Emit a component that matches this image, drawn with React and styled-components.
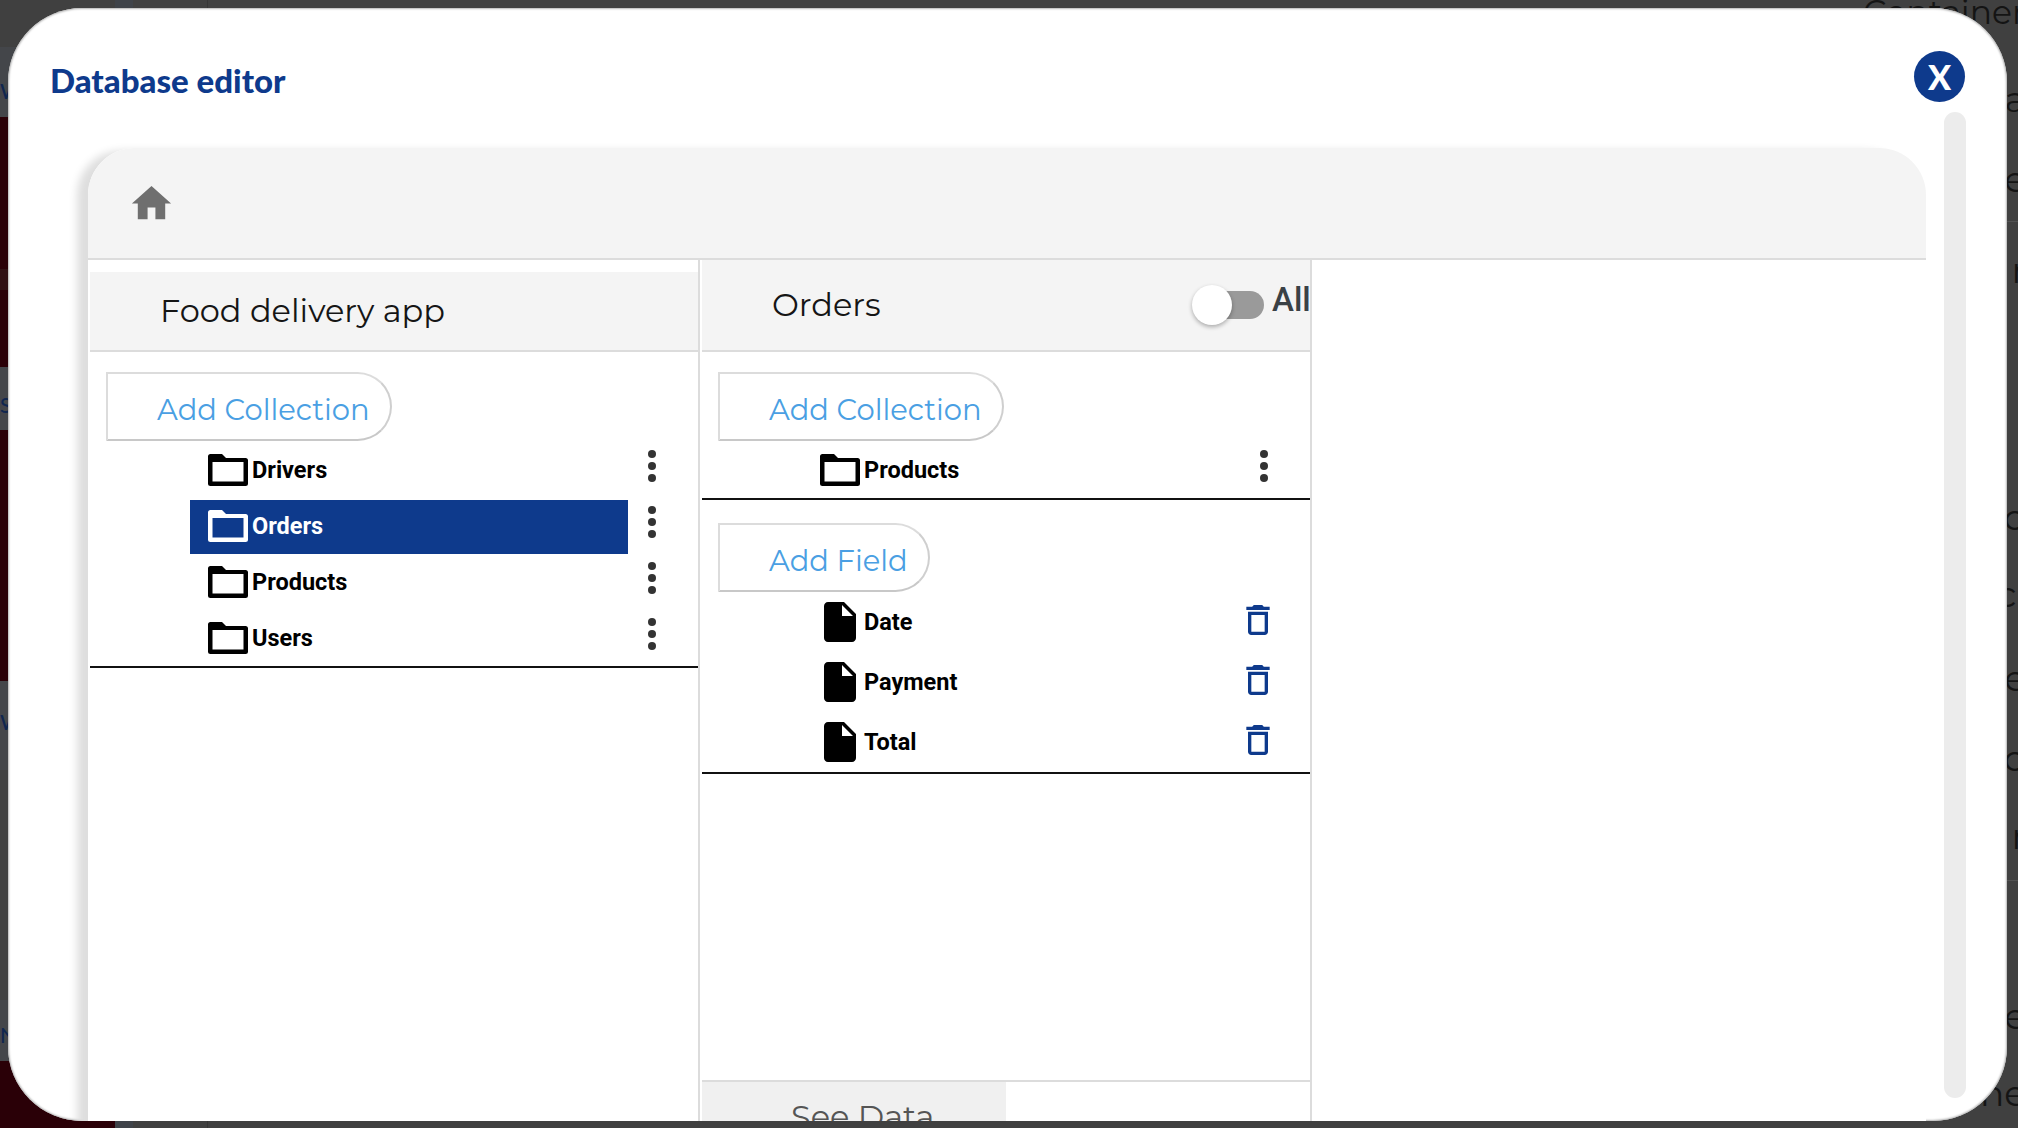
import React from 'react';
import styled, { createGlobalStyle } from 'styled-components';

const NAVY = '#0e3a8c';

const Global = createGlobalStyle`
  html, body { margin: 0; padding: 0; background: #404040; }
  * { box-sizing: border-box; }
`;

const Page = styled.div`
  position: relative;
  width: 2018px;
  height: 1128px;
  overflow: hidden;
  display: flex;
  background: #404040;
  font-family: Inter, "Liberation Sans", sans-serif;
`;

const BackSide = styled.div`
  width: 115px;
  display: flex;
  flex-direction: column;
  flex: none;
`;

const Band = styled.div`
  height: ${p => p.$h}px;
  background: ${p => p.$bg};
  padding-top: ${p => p.$pad || 0}px;
  color: #10264f;
  font: 500 21px/1 Lato, sans-serif;
  overflow: hidden;
`;

const BackMiddle = styled.div`
  flex: 1;
  display: flex;
  flex-direction: column;
  justify-content: space-between;
`;

const BackEdge = styled.div`
  height: 8px;
  display: flex;
`;

const EdgeTab = styled.span`
  width: 18px;
  background: #3f4349;
  margin-right: 74px;
`;

const EdgeRule = styled.span`
  width: 1px;
  background: #363636;
`;

const BackRight = styled.div`
  width: 155px;
  flex: none;
  display: flex;
  flex-direction: column;
  color: #141414;
  font: 400 33px/40px Montserrat, Inter, sans-serif;
`;

const BackTitle = styled.div`
  margin-top: -8px;
  white-space: nowrap;
  height: 40px;
  flex: none;
`;

const BackFrag = styled.div`
  height: 40px;
  flex: none;
  margin-top: ${p => p.$mt}px;
  margin-right: -8px;
  font-size: 36px;
  text-align: right;
  white-space: nowrap;
`;

const BackRule = styled.div`
  height: 1px;
  flex: none;
  margin-top: ${p => p.$mt}px;
  background: #525252;
`;

const Modal = styled.div`
  position: absolute;
  left: 8px;
  top: 8px;
  width: 1999px;
  height: 1113px;
  background: #fff;
  border-radius: 74px;
  overflow: hidden;
  box-shadow: inset 0 0 2px 1px #b4b4b4;
`;

const ModalHead = styled.header`
  height: 140px;
  display: flex;
  justify-content: space-between;
  align-items: flex-start;
  padding: 0 42px;
`;

const Title = styled.h1`
  margin: 55px 0 0;
  font: 900 33px/34px Lato, sans-serif;
  color: ${NAVY};
`;

const CloseButton = styled.button`
  width: 51px;
  height: 51px;
  margin-top: 43px;
  border: none;
  padding: 0;
  border-radius: 50%;
  background: ${NAVY};
  color: #fff;
  font: 900 34px/51px Lato, sans-serif;
`;

const ScrollThumb = styled.div`
  position: absolute;
  left: 1936px;
  top: 104px;
  width: 22px;
  height: 986px;
  border-radius: 11px;
  background: #ececec;
`;

const Panel = styled.section`
  width: 1838px;
  margin-left: 80px;
  border-radius: 47px 47px 0 0;
  background: #fff;
  box-shadow: -14px 0 8px -3px #dedede;
`;

const Toolbar = styled.div`
  height: 112px;
  padding: 32px 0 0 40px;
  background: #f4f4f4;
  border-bottom: 2px solid #dcdcdc;
  border-radius: 47px 47px 0 0;
`;

const HomeIcon = styled.svg`
  width: 47px;
  height: 47px;
  fill: #6f6f6f;
`;

const Columns = styled.div`
  display: flex;
  height: 920px;
`;

const Column = styled.div`
  width: ${p => p.$w}px;
  padding-left: 2px;
  padding-top: ${p => p.$top || 0}px;
  border-right: 2px solid #dcdcdc;
  display: flex;
  flex-direction: column;
`;

const ColumnHead = styled.div`
  height: ${p => p.$h}px;
  flex: none;
  display: flex;
  align-items: center;
  padding-left: ${p => p.$pad}px;
  background: #f4f4f4;
  border-bottom: 2px solid #dcdcdc;
  font: 400 32px/1 Montserrat, Inter, sans-serif;
  color: #151515;
`;

const Toggle = styled.div`
  position: relative;
  margin-left: auto;
  width: 72px;
  height: 28px;
  display: flex;
  justify-content: flex-end;
`;

const Track = styled.span`
  width: 50px;
  height: 28px;
  border-radius: 14px;
  background: #9a9a9a;
`;

const Thumb = styled.span`
  position: absolute;
  left: 0;
  top: -6px;
  width: 40px;
  height: 40px;
  border-radius: 50%;
  background: #fff;
  box-shadow: 0 2px 4px rgba(0, 0, 0, 0.3);
`;

const AllLabel = styled.span`
  margin: -12px 0 0 8px;
  font: 500 33px/1 Roboto, sans-serif;
  color: #3a4146;
  width: 38px;
  overflow: hidden;
`;

const AddButton = styled.button`
  display: block;
  flex: none;
  width: ${p => p.$w}px;
  height: 69px;
  margin: ${p => p.$top}px 0 ${p => p.$bottom || 0}px 16px;
  padding: 6px 0 0 49px;
  text-align: left;
  background: #fff;
  border: 2px solid #dcdcdc;
  border-right-color: #cfcfcf;
  border-bottom-color: #c8c8c8;
  border-radius: 0 35px 35px 0;
  color: #4a9fe3;
  font: 400 29px/1 Montserrat, Inter, sans-serif;
`;

const Section = styled.div`
  border-bottom: 2px solid #111;
  flex: none;
`;

const Row = styled.div`
  display: flex;
  align-items: flex-end;
  height: 56px;
  padding-left: 100px;
`;

const RowBox = styled.div`
  width: 438px;
  height: 54px;
  display: flex;
  align-items: center;
  gap: 4px;
  padding-left: 18px;
  background: ${p => (p.$active ? NAVY : 'transparent')};
  color: ${p => (p.$active ? '#fff' : '#000')};
  font: 700 23.5px/1 Roboto, sans-serif;
`;

const RowName = styled.span`
  margin-top: -1px;
`;

const Kebab = styled.svg`
  width: 8px;
  height: 32px;
  margin: 0 0 16px 20px;
  fill: #333;
`;

const FieldRow = styled.div`
  display: flex;
  align-items: center;
  height: 60px;
  padding-left: 122px;
  font: 700 23.5px/1 Roboto, sans-serif;
  color: #000;
`;

const FieldName = styled.span`
  padding-top: 1px;
`;

const FileGlyph = styled.svg`
  width: 32px;
  height: 40px;
  fill: #000;
  margin-right: 8px;
`;

const Trash = styled.svg`
  width: 24px;
  height: 30px;
  margin: 0 40px 4px auto;
  fill: ${NAVY};
`;

const ColumnFoot = styled.div`
  margin-top: auto;
  height: 100px;
  border-top: 2px solid #dcdcdc;
`;

const SeeData = styled.div`
  width: 304px;
  height: 70px;
  padding-left: 89px;
  display: flex;
  align-items: center;
  background: #f0f0f0;
  color: #555;
  font: 400 32px/1 Montserrat, Inter, sans-serif;
`;

const FolderSvg = styled.svg`
  flex: none;
  width: 40px;
  height: 32px;
  margin-bottom: 2px;
  fill: ${p => p.$color};
`;

const FolderGlyph = ({ color }) => (
  <FolderSvg viewBox="0 0 40 32" $color={color}>
    <path fillRule="evenodd" d="M2.500 0H14L18 4H37.500a2.500 2.500 0 0 1 2.500 2.500V29.500a2.500 2.500 0 0 1-2.500 2.500H2.500a2.500 2.500 0 0 1-2.500-2.500V2.500a2.500 2.500 0 0 1 2.500-2.500zM4.500 8V27.500H35.500V8z" />
  </FolderSvg>
);

const Dots = () => (
  <Kebab viewBox="0 0 8 32">
    <circle cx="4" cy="4" r="4" />
    <circle cx="4" cy="16" r="4" />
    <circle cx="4" cy="28" r="4" />
  </Kebab>
);

const FolderRow = ({ name, active }) => (
  <Row>
    <RowBox $active={active}>
      <FolderGlyph color={active ? '#fff' : '#000'} />
      <RowName>{name}</RowName>
    </RowBox>
    <Dots />
  </Row>
);

const Field = ({ name }) => (
  <FieldRow>
    <FileGlyph viewBox="4 2 16 20">
      <path d="M6 2c-1.100 0-1.990.9-1.990 2L4 20c0 1.100.89 2 1.990 2H18c1.100 0 2-.9 2-2V8l-6-6H6zm7 7V3.500L18.500 9H13z" />
    </FileGlyph>
    <FieldName>{name}</FieldName>
    <Trash viewBox="5 3 14 18">
      <path d="M6 19c0 1.100.9 2 2 2h8c1.100 0 2-.9 2-2V7H6v12zM8 9h8v10H8V9zm7.500-5l-1-1h-5l-1 1H5v2h14V4h-3.500z" />
    </Trash>
  </FieldRow>
);

const fragments = [
  ['a', 47], ['e', 40], [null, 22], ['r', 28], ['o', 207], ['cl', 37], ['e', 44], ['o', 40], ['r', 38], [null, 24], ['ge', 115], ['ne', 37],
];

export default function App() {
  return (
    <Page>
      <Global />
      <BackSide>
        <Band $h={47} $bg="#404040" />
        <Band $h={70} $bg="#44464a" $pad={33}>W</Band>
        <Band $h={152} $bg="#2a0007" />
        <Band $h={21} $bg="#301114" />
        <Band $h={77} $bg="#2a0007" />
        <Band $h={63} $bg="#44464a" $pad={27}>S</Band>
        <Band $h={251} $bg="#2a0007" />
        <Band $h={89} $bg="#44464a" $pad={30}>W</Band>
        <Band $h={230} $bg="#404040" />
        <Band $h={61} $bg="#44464a" $pad={24}>N</Band>
        <Band $h={67} $bg="#2a0007" />
      </BackSide>
      <BackMiddle>
        <BackEdge><EdgeTab /><EdgeRule /></BackEdge>
        <BackEdge><EdgeTab /><EdgeRule /></BackEdge>
      </BackMiddle>
      <BackRight>
        <BackTitle>Container</BackTitle>
        {fragments.map(([t, mt], i) =>
          t === null
            ? <BackRule key={i} $mt={mt} />
            : <BackFrag key={i} $mt={mt}>{t}</BackFrag>
        )}
      </BackRight>

      <Modal>
        <ModalHead>
          <Title>Database editor</Title>
          <CloseButton>X</CloseButton>
        </ModalHead>
        <Panel>
          <Toolbar>
            <HomeIcon viewBox="0 0 24 24">
              <path d="M10 20v-6h4v6h5v-8h3L12 3 2 12h3v8z" />
            </HomeIcon>
          </Toolbar>
          <Columns>
            <Column $w={612} $top={12}>
              <ColumnHead $h={80} $pad={70}>Food delivery app</ColumnHead>
              <AddButton $w={286} $top={20} $bottom={1}>Add Collection</AddButton>
              <Section>
                <FolderRow name="Drivers" />
                <FolderRow name="Orders" active />
                <FolderRow name="Products" />
                <FolderRow name="Users" />
              </Section>
            </Column>
            <Column $w={612}>
              <ColumnHead $h={92} $pad={70}>
                Orders
                <Toggle><Track /><Thumb /></Toggle>
                <AllLabel>All</AllLabel>
              </ColumnHead>
              <AddButton $w={286} $top={20} $bottom={1}>Add Collection</AddButton>
              <Section>
                <FolderRow name="Products" />
              </Section>
              <AddButton $w={212} $top={23}>Add Field</AddButton>
              <Section>
                <Field name="Date" />
                <Field name="Payment" />
                <Field name="Total" />
              </Section>
              <ColumnFoot>
                <SeeData>See Data</SeeData>
              </ColumnFoot>
            </Column>
          </Columns>
        </Panel>
        <ScrollThumb />
      </Modal>
    </Page>
  );
}
